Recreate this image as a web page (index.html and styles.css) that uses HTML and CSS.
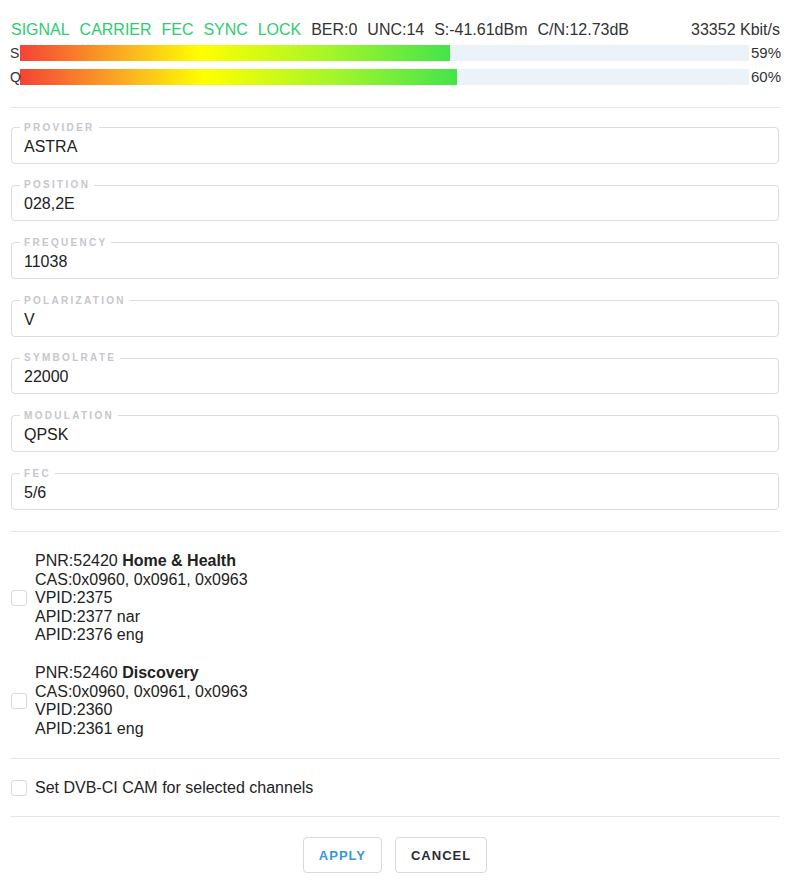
FILE: index.html
```html
<!DOCTYPE html>
<html>
<head>
<meta charset="utf-8">
<link rel="stylesheet" href="styles.css">
</head>
<body>
<div class="page">
  <div class="status">
    <div class="flags">
      <span class="ok">SIGNAL</span>
      <span class="ok">CARRIER</span>
      <span class="ok">FEC</span>
      <span class="ok">SYNC</span>
      <span class="ok">LOCK</span>
      <span>BER:0</span>
      <span>UNC:14</span>
      <span>S:-41.61dBm</span>
      <span>C/N:12.73dB</span>
    </div>
    <div class="rate">33352 Kbit/s</div>
  </div>
  <div class="bars">
    <div class="bar-row">
      <span class="bar-label">S</span>
      <div class="track"><div class="fill" style="width:59%"></div></div>
      <span class="pct">59%</span>
    </div>
    <div class="bar-row">
      <span class="bar-label">Q</span>
      <div class="track"><div class="fill" style="width:60%"></div></div>
      <span class="pct">60%</span>
    </div>
  </div>

  <hr class="sep sep-top">

  <div class="fields">
    <fieldset class="field"><legend>PROVIDER</legend><div class="value">ASTRA</div></fieldset>
    <fieldset class="field"><legend>POSITION</legend><div class="value">028,2E</div></fieldset>
    <fieldset class="field"><legend>FREQUENCY</legend><div class="value">11038</div></fieldset>
    <fieldset class="field"><legend>POLARIZATION</legend><div class="value">V</div></fieldset>
    <fieldset class="field"><legend>SYMBOLRATE</legend><div class="value">22000</div></fieldset>
    <fieldset class="field"><legend>MODULATION</legend><div class="value">QPSK</div></fieldset>
    <fieldset class="field"><legend>FEC</legend><div class="value">5/6</div></fieldset>
  </div>

  <hr class="sep">

  <div class="channels">
    <label class="channel">
      <span class="cb"></span>
      <span class="info">
        <span class="line">PNR:52420 <b>Home &amp; Health</b></span>
        <span class="line">CAS:0x0960, 0x0961, 0x0963</span>
        <span class="line">VPID:2375</span>
        <span class="line">APID:2377 nar</span>
        <span class="line">APID:2376 eng</span>
      </span>
    </label>
    <label class="channel">
      <span class="cb"></span>
      <span class="info">
        <span class="line">PNR:52460 <b>Discovery</b></span>
        <span class="line">CAS:0x0960, 0x0961, 0x0963</span>
        <span class="line">VPID:2360</span>
        <span class="line">APID:2361 eng</span>
      </span>
    </label>
  </div>

  <hr class="sep">

  <label class="channel cam">
    <span class="cb"></span>
    <span class="info"><span class="line">Set DVB-CI CAM for selected channels</span></span>
  </label>

  <hr class="sep">

  <div class="actions">
    <button class="btn btn-apply">APPLY</button>
    <button class="btn">CANCEL</button>
  </div>
</div>
</body>
</html>
```

FILE: styles.css
```css
* { box-sizing: border-box; }

body {
  margin: 0;
  background: #ffffff;
  font-family: "Liberation Sans", Arial, sans-serif;
  font-size: 16px;
  color: #333333;
}

.page {
  padding: 20px 10px 0 10px;
}

.status {
  display: flex;
  justify-content: space-between;
  line-height: 20px;
  padding-left: 1px;
}

.flags {
  display: flex;
  gap: 9.9px;
}

.ok { color: #2ecc71; }

.bars {
  display: flex;
  flex-direction: column;
  gap: 8px;
  margin-top: 5px;
}

.bar-row {
  display: flex;
  align-items: center;
  height: 16px;
}

.bar-label {
  position: relative;
  z-index: 1;
  width: 10px;
  flex: none;
  font-size: 14px;
  line-height: 16px;
  white-space: nowrap;
}

.track {
  flex: 1;
  height: 16px;
  background: #ebf3f9;
}

.fill {
  height: 100%;
  background: linear-gradient(to right, #f44336 0%, #fbb71f 26%, #ffff00 42%, #a4f52a 72%, #44e44a 100%);
}

.pct {
  width: 32px;
  margin-right: -1px;
  text-align: right;
  font-size: 15px;
  line-height: 16px;
}

.sep {
  border: 0;
  border-top: 1px solid #e6e6e6;
  margin: 0;
  height: 0;
}

.sep-top { margin-top: 22px; }

.fields {
  padding: 13.6px 1px 6px 1px;
}

.field {
  margin: 0 0 15.67px 0;
  border: 1px solid #dcdcdc;
  border-radius: 4px;
  padding: 4px 12px 7px 12px;
  min-width: 0;
}

.field legend {
  margin-left: -4px;
  padding: 0 4px 0 4px;
  font-size: 10px;
  line-height: 12px;
  font-weight: bold;
  letter-spacing: 2.3px;
  color: #c6c6cc;
}

.value {
  line-height: 18px;
  color: #222;
}

.channels {
  display: flex;
  flex-direction: column;
  gap: 19.5px;
  padding: 20px 0 20px 0;
}

.channel {
  display: flex;
  align-items: center;
  gap: 8px;
  padding-left: 1px;
}

.cam {
  padding-top: 19.75px;
  padding-bottom: 18.75px;
}

.cb {
  width: 16px;
  height: 16px;
  flex: none;
  border: 1px solid #d9d9d9;
  border-radius: 3px;
  background: #fff;
}

.info {
  display: flex;
  flex-direction: column;
}

.line {
  line-height: 18.5px;
  color: #222;
}

.actions {
  display: flex;
  justify-content: center;
  gap: 13px;
  padding-top: 20px;
}

.btn {
  height: 36px;
  padding: 0 15px;
  background: #fff;
  border: 1px solid #d8d8e0;
  border-radius: 4px;
  font-family: "Liberation Sans", Arial, sans-serif;
  font-size: 13px;
  font-weight: bold;
  letter-spacing: 1px;
  color: #2b2b33;
}

.btn-apply { color: #3498db; }
```
